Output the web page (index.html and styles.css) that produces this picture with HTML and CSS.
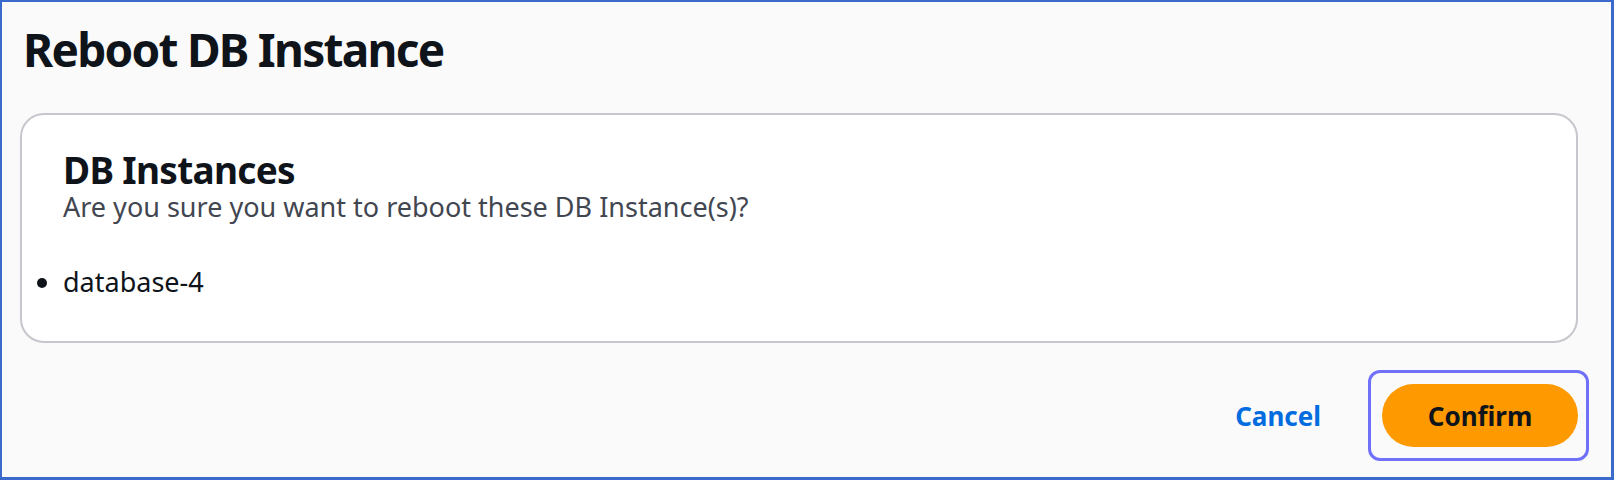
FILE: index.html
```html
<!DOCTYPE html>
<html lang="en">
<head>
<meta charset="utf-8">
<title>Reboot DB Instance</title>
<link rel="stylesheet" href="styles.css">
</head>
<body>
<div class="frame">
  <h1 class="title">Reboot DB Instance</h1>
  <section class="card">
    <h2 class="card-title">DB Instances</h2>
    <p class="card-desc">Are you sure you want to reboot these DB Instance(s)?</p>
    <ul class="item-list">
      <li>database-4</li>
    </ul>
  </section>
  <div class="footer">
    <button class="btn-link" type="button">Cancel</button>
    <button class="btn-primary" type="button">Confirm</button>
  </div>
</div>
</body>
</html>
```

FILE: styles.css
```css
* { box-sizing: border-box; }

html, body {
  margin: 0;
  padding: 0;
}

body {
  font-family: "Noto Sans", "Open Sans", "Liberation Sans", sans-serif;
  color: #0f141a;
  background: #fafafa;
}

.frame {
  width: 1614px;
  height: 480px;
  border-style: solid;
  border-color: #3a6bcc;
  border-width: 2px 3px 3px 2px;
  background: #fafafa;
  padding: 19px 33px 0 18px;
}

.title {
  margin: 0 0 36px 3px;
  font-size: 46px;
  line-height: 56px;
  font-weight: 700;
  letter-spacing: -1.75px;
  color: #0f141a;
}

.card {
  height: 230px;
  background: #ffffff;
  border: 2px solid #c6c6cd;
  border-radius: 24px;
  padding: 33px 41px 0 41px;
}

.card-title {
  margin: 0;
  font-size: 37px;
  line-height: 44px;
  font-weight: 700;
  letter-spacing: -0.7px;
  color: #0f141a;
}

.card-desc {
  margin: 0;
  font-size: 27px;
  line-height: 30px;
  color: #424650;
}

.item-list {
  margin: 45px 0 0 0;
  padding: 0;
  list-style: disc outside;
  font-size: 27px;
  line-height: 30px;
  color: #0f141a;
}

.footer {
  display: flex;
  justify-content: flex-end;
  align-items: center;
  gap: 61px;
  margin-top: 41px;
}

.btn-link {
  border: 0;
  background: none;
  padding: 0;
  font-family: inherit;
  font-size: 26px;
  font-weight: 700;
  color: #006ce0;
  line-height: 30px;
}

.btn-primary {
  position: relative;
  width: 196px;
  height: 63px;
  border: 0;
  border-radius: 32px;
  background: #ff9900;
  font-family: inherit;
  font-size: 26px;
  font-weight: 700;
  color: #0f141a;
  padding: 0;
}

.btn-primary::before {
  content: "";
  position: absolute;
  top: -14px;
  bottom: -14px;
  left: -14px;
  right: -11px;
  border: 3px solid #7070fa;
  border-radius: 12px;
}
```
